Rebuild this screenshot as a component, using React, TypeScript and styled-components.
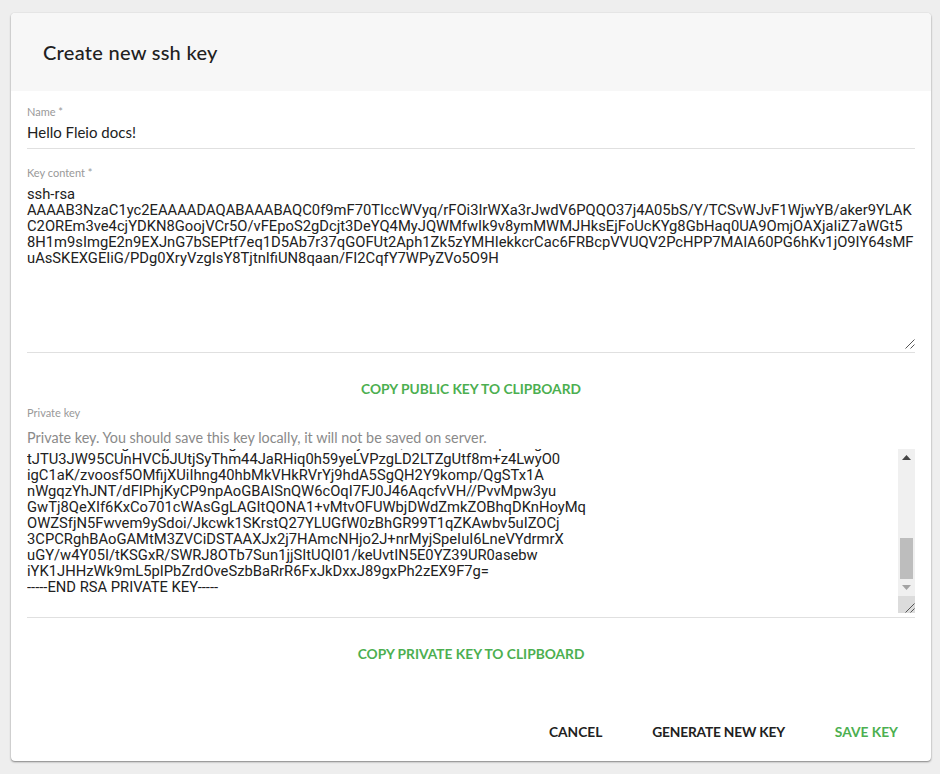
import React from 'react';
import styled, { createGlobalStyle } from 'styled-components';

const publicKeyLines = [
    'ssh-rsa',
    'AAAAB3NzaC1yc2EAAAADAQABAAABAQC0f9mF70TIccWVyq/rFOi3IrWXa3rJwdV6PQQO37j4A05bS/Y/TCSvWJvF1WjwYB/aker9YLAK',
    'C2OREm3ve4cjYDKN8GoojVCr5O/vFEpoS2gDcjt3DeYQ4MyJQWMfwIk9v8ymMWMJHksEjFoUcKYg8GbHaq0UA9OmjOAXjaIiZ7aWGt5',
    '8H1m9sImgE2n9EXJnG7bSEPtf7eq1D5Ab7r37qGOFUt2Aph1Zk5zYMHIekkcrCac6FRBcpVVUQV2PcHPP7MAIA60PG6hKv1jO9IY64sMF',
    'uAsSKEXGEIiG/PDg0XryVzgIsY8TjtnIfiUN8qaan/FI2CqfY7WPyZVo5O9H',
];

// first line is scrolled away, only its descenders peek out under the hint
const privateKeyLines = [
    'AbCdEFGHIJKgMNOjjRSTUVWgXZAbCdEFGHIJKLyNOPQRSTUVWXZAbpCDEg',
    'tJTU3JW95CUnHVCbJUtjSyThm44JaRHiq0h59yeLVPzgLD2LTZgUtf8m+z4LwyO0',
    'igC1aK/zvoosf5OMfijXUiIhng40hbMkVHkRVrYj9hdA5SgQH2Y9komp/QgSTx1A',
    'nWgqzYhJNT/dFIPhjKyCP9npAoGBAISnQW6cOqI7FJ0J46AqcfvVH//PvvMpw3yu',
    'GwTj8QeXIf6KxCo701cWAsGgLAGItQONA1+vMtvOFUWbjDWdZmkZOBhqDKnHoyMq',
    'OWZSfjN5Fwvem9ySdoi/Jkcwk1SKrstQ27YLUGfW0zBhGR99T1qZKAwbv5uIZOCj',
    '3CPCRghBAoGAMtM3ZVCiDSTAAXJx2j7HAmcNHjo2J+nrMyjSpeIuI6LneVYdrmrX',
    'uGY/w4Y05I/tKSGxR/SWRJ8OTb7Sun1jjSItUQI01/keUvtIN5E0YZ39UR0asebw',
    'iYK1JHHzWk9mL5pIPbZrdOveSzbBaRrR6FxJkDxxJ89gxPh2zEX9F7g=',
    '-----END RSA PRIVATE KEY-----',
];

const GlobalStyle = createGlobalStyle`
    html, body {
        margin: 0;
        padding: 0;
        background: #eeeeee;
    }
    body {
        font-family: 'Lato', 'Open Sans', sans-serif;
    }
`;

const Page = styled.div`
    width: 940px;
    height: 774px;
    padding: 13px 9px 13px 11px;
    box-sizing: border-box;
    overflow: hidden;
`;

const Card = styled.div`
    height: 748px;
    background: #fff;
    border-radius: 4px;
    box-shadow: 0 1px 2px rgba(0, 0, 0, 0.45), 0 0 1px rgba(0, 0, 0, 0.15);
    display: flex;
    flex-direction: column;
    overflow: hidden;
`;

const Header = styled.div`
    height: 78px;
    flex: none;
    background: #f7f7f7;
    display: flex;
    align-items: center;
    padding-left: 32px;
`;

const Title = styled.h2`
    margin: 0;
    font-size: 20px;
    font-weight: 500;
    color: #212121;
    letter-spacing: 0.28px;
`;

const Body = styled.div`
    flex: 1;
    padding: 15px 16px 0;
    display: flex;
    flex-direction: column;
`;

const Label = styled.div<{ $mt?: number }>`
    font-size: 11px;
    line-height: 12px;
    color: #999;
    margin-top: ${p => p.$mt ?? 0}px;
    flex: none;
`;

const Field = styled.div<{ $height: number; $mt: number }>`
    height: ${p => p.$height}px;
    margin-top: ${p => p.$mt}px;
    border-bottom: 1px solid #e0e0e0;
    flex: none;
    position: relative;
    box-sizing: border-box;
`;

const NameValue = styled.div`
    font-size: 15px;
    line-height: 20px;
    color: #212121;
    margin-top: 4px;
`;

const KeyText = styled.div`
    font-family: 'Roboto', sans-serif;
    font-size: 14.76px;
    line-height: 16px;
    color: #212121;
    white-space: pre;
    margin-top: 7px;
`;

const Hint = styled.div`
    font-size: 14.35px;
    line-height: 16px;
    color: #8a8a8a;
    margin-top: 11px;
    flex: none;
`;

const PrivateRow = styled.div`
    display: flex;
    height: 164px;
`;

const PrivateText = styled(KeyText)`
    flex: 1;
    height: 146px;
    margin-top: 0;
    overflow: hidden;
    display: flex;
    flex-direction: column;
    justify-content: flex-end;
`;

const Scrollbar = styled.div`
    width: 17px;
    display: flex;
    flex-direction: column;
    background: #f0f0f0;
`;

const ScrollTrack = styled.div`
    flex: 1;
    display: flex;
    flex-direction: column;
    align-items: center;
    justify-content: flex-end;
`;

const ScrollThumb = styled.div`
    width: 13px;
    height: 41px;
    background: #bdbdbd;
`;

const ArrowBox = styled.div`
    height: 17px;
    flex: none;
    display: flex;
    align-items: center;
    justify-content: center;
`;

const ResizeCorner = styled.div`
    height: 17px;
    flex: none;
    background: #dcdcdc;
    display: flex;
    align-items: flex-end;
    justify-content: flex-end;
`;

const Grip = styled.svg`
    display: block;
`;

const GripOverlay = styled.div`
    position: absolute;
    right: 0;
    bottom: 3px;
    line-height: 0;
`;

const CopyRow = styled.div<{ $mt: number }>`
    display: flex;
    justify-content: center;
    margin-top: ${p => p.$mt}px;
    flex: none;
`;

const TextButton = styled.button<{ $green?: boolean; $tight?: boolean }>`
    border: 0;
    background: none;
    padding: 0;
    font-family: inherit;
    font-size: 13.75px;
    line-height: 16px;
    font-weight: 700;
    text-transform: uppercase;
    letter-spacing: ${p => (p.$tight ? '-0.2px' : 'normal')};
    color: ${p => (p.$green ? '#4caf50' : '#212121')};
`;

const Actions = styled.div`
    margin-top: auto;
    height: 59px;
    flex: none;
    display: flex;
    justify-content: flex-end;
    gap: 50px;
    padding-right: 17px;
`;

const GripIcon = () => (
    <Grip width="10" height="10" viewBox="0 0 10 10">
        <path d="M0.5 9.5 L9.5 0.5 M5.5 9.5 L9.5 5.5" stroke="#555" strokeWidth="1" fill="none" />
    </Grip>
);

const App = () => (
    <>
        <GlobalStyle />
        <Page>
            <Card>
                <Header>
                    <Title>Create new ssh key</Title>
                </Header>
                <Body>
                    <Label>Name *</Label>
                    <Field $height={31} $mt={0}>
                        <NameValue>Hello Fleio docs!</NameValue>
                    </Field>
                    <Field $height={186} $mt={18}>
                        <Label>Key content *</Label>
                        <KeyText>{publicKeyLines.join('\n')}</KeyText>
                        <GripOverlay>
                            <GripIcon />
                        </GripOverlay>
                    </Field>
                    <CopyRow $mt={28}>
                        <TextButton $green>Copy public key to clipboard</TextButton>
                    </CopyRow>
                    <Label $mt={10}>Private key</Label>
                    <Hint>Private key. You should save this key locally, it will not be saved on server.</Hint>
                    <Field $height={169} $mt={3}>
                        <PrivateRow>
                            <PrivateText>{privateKeyLines.join('\n')}</PrivateText>
                            <Scrollbar>
                                <ArrowBox>
                                    <svg width="9" height="5" viewBox="0 0 9 5">
                                        <path d="M4.5 0 L9 5 H0 Z" fill="#444" />
                                    </svg>
                                </ArrowBox>
                                <ScrollTrack>
                                    <ScrollThumb />
                                </ScrollTrack>
                                <ArrowBox>
                                    <svg width="9" height="5" viewBox="0 0 9 5">
                                        <path d="M0 0 H9 L4.5 5 Z" fill="#a3a3a3" />
                                    </svg>
                                </ArrowBox>
                                <ResizeCorner>
                                    <GripIcon />
                                </ResizeCorner>
                            </Scrollbar>
                        </PrivateRow>
                    </Field>
                    <CopyRow $mt={28}>
                        <TextButton $green>Copy private key to clipboard</TextButton>
                    </CopyRow>
                    <Actions>
                        <TextButton>Cancel</TextButton>
                        <TextButton $tight>Generate new key</TextButton>
                        <TextButton $green>Save key</TextButton>
                    </Actions>
                </Body>
            </Card>
        </Page>
    </>
);

export default App;
